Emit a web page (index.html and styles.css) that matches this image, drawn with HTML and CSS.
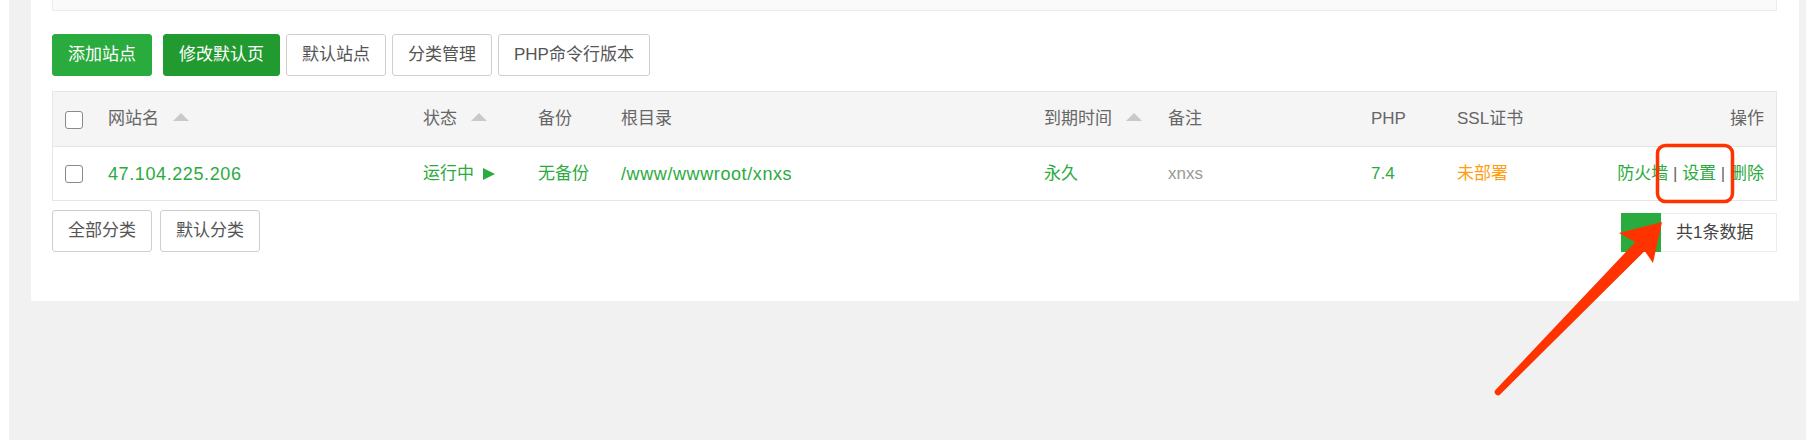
FILE: index.html
```html
<!DOCTYPE html>
<html lang="zh-CN">
<head>
<meta charset="utf-8">
<title>网站</title>
<link rel="stylesheet" href="styles.css">
</head>
<body>
<div class="page">
  <div class="panel">
    <div class="topbox"></div>
    <div class="toolbar">
      <button class="btn btn-green">添加站点</button>
      <button class="btn btn-dark">修改默认页</button>
      <button class="btn btn-default">默认站点</button>
      <button class="btn btn-default">分类管理</button>
      <button class="btn btn-default">PHP命令行版本</button>
    </div>
    <div class="table-wrap">
      <table class="sites">
        <colgroup>
          <col class="c-chk"><col class="c-name"><col class="c-status"><col class="c-backup"><col class="c-root"><col class="c-exp"><col class="c-note"><col class="c-php"><col class="c-ssl"><col>
        </colgroup>
        <thead>
          <tr>
            <th><span class="chk"></span></th>
            <th>网站名<span class="sort"></span></th>
            <th>状态<span class="sort"></span></th>
            <th>备份</th>
            <th>根目录</th>
            <th>到期时间<span class="sort"></span></th>
            <th>备注</th>
            <th>PHP</th>
            <th>SSL证书</th>
            <th class="right">操作</th>
          </tr>
        </thead>
        <tbody>
          <tr>
            <td><span class="chk"></span></td>
            <td class="green wide">47.104.225.206</td>
            <td class="green">运行中<span class="play"></span></td>
            <td class="green">无备份</td>
            <td class="green wide">/www/wwwroot/xnxs</td>
            <td class="green">永久</td>
            <td class="muted">xnxs</td>
            <td class="green">7.4</td>
            <td class="orange">未部署</td>
            <td class="right ops"><span class="green">防火墙</span> | <span class="green">设置</span> | <span class="green">删除</span></td>
          </tr>
        </tbody>
      </table>
    </div>
    <div class="footer">
      <div class="cats">
        <button class="btn btn-default">全部分类</button>
        <button class="btn btn-default">默认分类</button>
      </div>
      <div class="pager">
        <span class="pg-cur"></span>
        <span class="pg-total">共1条数据</span>
      </div>
    </div>
  </div>
</div>
<svg class="annot" width="1806" height="446" viewBox="0 0 1806 446" xmlns="http://www.w3.org/2000/svg">
  <rect x="1657.5" y="145.5" width="75" height="56" rx="8" ry="8" fill="none" stroke="#ff3300" stroke-width="3.5"/>
  <path d="M1662 222 L1653 263 L1644.7 251 L1500.4 394.2 A3.1 3.1 0 0 1 1495.6 389.8 L1635.3 242 L1619 233 Z" fill="#ff3300"/>
</svg>
</body>
</html>
```
FILE: styles.css
```css
* { box-sizing: border-box; }
html, body { margin: 0; padding: 0; background: #fff; }
body {
  width: 1806px;
  height: 446px;
  overflow: hidden;
  position: relative;
  font-family: "Liberation Sans", "Noto Sans CJK SC", sans-serif;
  font-size: 17px;
  color: #666;
}
.page {
  margin-left: 9px;
  height: 440px;
  background: #f1f1f1;
  padding-left: 22px;
}
.panel {
  width: 1768px;
  background: #fff;
  padding: 0 22px 49px 21px;
}
.topbox {
  height: 11px;
  background: #fafafa;
  border: 1px solid #ececec;
  border-top: none;
}
.toolbar {
  display: flex;
  margin-top: 23px;
  gap: 6px;
}
.toolbar .btn-green { margin-right: 5px; }
.btn {
  height: 42px;
  padding: 0 15px;
  border-radius: 3px;
  font-family: inherit;
  font-size: 17px;
  line-height: 40px;
  white-space: nowrap;
  cursor: pointer;
}
.btn-green { background: #2aab3e; border: 1px solid #2aab3e; color: #fff; }
.btn-dark { background: #219a2f; border: 1px solid #219a2f; color: #fff; }
.btn-default { background: #fff; border: 1px solid #cfcfcf; color: #555; }

.table-wrap {
  margin-top: 15px;
  border: 1px solid #e6e6e6;
}
.sites {
  width: 100%;
  table-layout: fixed;
  border-spacing: 0;
}
.c-chk { width: 43px; }
.c-name { width: 315px; }
.c-status { width: 115px; }
.c-backup { width: 83px; }
.c-root { width: 423px; }
.c-exp { width: 124px; }
.c-note { width: 203px; }
.c-php { width: 86px; }
.c-ssl { width: 120px; }
.sites th, .sites td {
  padding: 0 12px;
  text-align: left;
  vertical-align: middle;
  line-height: 20px;
  white-space: nowrap;
  font-weight: normal;
}
.sites th {
  height: 55px;
  background: #f5f5f5;
  border-bottom: 1px solid #e6e6e6;
  color: #666;
}
.sites td { height: 53px; }
.sites td.wide { font-size: 18px; letter-spacing: 0.6px; }
.sites .right { text-align: right; }
.chk {
  display: inline-block;
  width: 18px;
  height: 18px;
  border: 1.5px solid #8a8a8a;
  border-radius: 3px;
  background: #fff;
  vertical-align: middle;
}
.sort {
  display: inline-block;
  width: 0;
  height: 0;
  border-left: 8px solid transparent;
  border-right: 8px solid transparent;
  border-bottom: 8px solid #c9c9c9;
  margin-left: 14px;
  vertical-align: 3px;
}
.play {
  display: inline-block;
  width: 0;
  height: 0;
  border-top: 6.5px solid transparent;
  border-bottom: 6.5px solid transparent;
  border-left: 12px solid #2aab3e;
  margin-left: 9px;
  vertical-align: -1px;
}
.green { color: #2aab3e; }
.muted { color: #999; }
.orange { color: #ff9d12; }
.ops { color: #666; }

.footer {
  display: flex;
  justify-content: space-between;
  align-items: flex-end;
  margin-top: 9px;
}
.cats { display: flex; gap: 8px; }
.pager { display: flex; height: 39px; }
.pg-cur { width: 40px; background: #2aab3e; }
.pg-total {
  width: 116px;
  border: 1px solid #ececec;
  border-left: none;
  padding-left: 15px;
  line-height: 37px;
  color: #444;
}
.annot {
  position: absolute;
  left: 0;
  top: 0;
  pointer-events: none;
}
```
